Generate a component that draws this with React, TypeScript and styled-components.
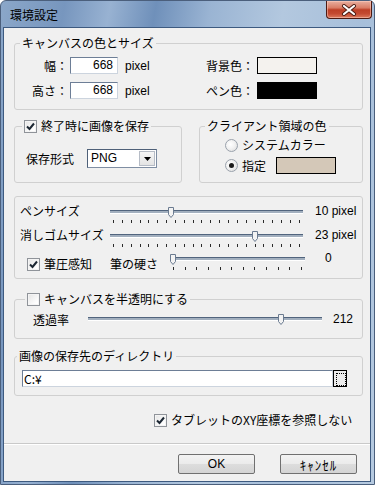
import React from "react";
import styled, { createGlobalStyle } from "styled-components";

const GlobalStyle = createGlobalStyle`
  html, body {
    margin: 0;
    padding: 0;
    background: #ffffff;
  }
  body {
    font-family: "Liberation Sans", "Noto Sans CJK JP", sans-serif;
    font-size: 12px;
    line-height: 14px;
    color: #000;
  }
  * {
    box-sizing: border-box;
  }
`;

const Window = styled.div`
  width: 375px;
  height: 485px;
  display: flex;
  flex-direction: column;
  border: 1px solid #4b5f7c;
  border-radius: 6px 6px 0 0;
  padding: 0 3px 2px 2px;
  background: linear-gradient(
    100deg,
    #8ba7c9 0%,
    #7796be 14%,
    #98b2d2 24%,
    #6f90ba 34%,
    #9ab4d3 46%,
    #b3c8df 62%,
    #a7bfda 80%,
    #b6cae0 100%
  );
`;

const TitleBar = styled.div`
  height: 26px;
  display: flex;
  align-items: center;
  justify-content: space-between;
  padding: 2px 0 0 7px;
`;

const Title = styled.span`
  font-family: "Noto Sans CJK JP", sans-serif;
  font-size: 12px;
  color: #000;
`;

const CloseButton = styled.div`
  align-self: flex-start;
  margin-top: -2px;
  margin-right: -1px;
  width: 46px;
  height: 18px;
  display: flex;
  align-items: center;
  justify-content: center;
  border: 1px solid #4d1a12;
  border-top: none;
  border-radius: 0 0 4px 4px;
  background: linear-gradient(
    180deg,
    #e9b0a0 0%,
    #d97d66 40%,
    #bd3f26 52%,
    #c44a31 75%,
    #dc7a5e 100%
  );
  box-shadow: inset 0 0 0 1px rgba(255, 210, 195, 0.5);
`;

const Client = styled.div`
  flex: 1;
  display: flex;
  flex-direction: column;
  border: 1px solid #3d5a80;
  background: #f0f0f0;
  padding: 8px 7px 0 10px;
`;

const Group = styled.fieldset<{ $pt: number; $pb: number; $mt?: number }>`
  margin: ${(p) => p.$mt ?? 0}px 0 0 0;
  padding: ${(p) => p.$pt}px 0 ${(p) => p.$pb}px 0;
  min-width: 0;
  border: 1px solid #d0d0d0;
  border-radius: 3px;
`;

const Legend = styled.legend<{ $ml: number }>`
  margin-left: ${(p) => p.$ml}px;
  padding: 0 2px;
  height: 14px;
  line-height: 14px;
  display: flex;
  align-items: center;
  gap: 4px;
  font-family: "Noto Sans CJK JP", sans-serif;
`;

const FieldRow = styled.div`
  display: flex;
  align-items: center;
  height: 17px;
  padding-right: 45px;
  & + & {
    margin-top: 8px;
  }
`;

const FieldLabel = styled.span<{ $w: number }>`
  width: ${(p) => p.$w}px;
  text-align: right;
  font-family: "Noto Sans CJK JP", sans-serif;
`;

const NumberBox = styled.div`
  width: 48px;
  height: 17px;
  margin-left: 2px;
  padding-right: 4px;
  text-align: right;
  line-height: 15px;
  background: #fff;
  border: 1px solid;
  border-color: #6d7e96 #ccd4de #ccd4de #6d7e96;
`;

const Unit = styled.span`
  margin-left: 7px;
`;

const Spacer = styled.div`
  flex: 1;
`;

const Swatch = styled.div<{ $color: string; $ml?: number }>`
  width: 60px;
  height: 17px;
  margin-left: ${(p) => p.$ml ?? 3}px;
  border: 1px solid #000;
  background: ${(p) => p.$color};
`;

const TwoCols = styled.div`
  display: flex;
  gap: 17px;
  margin-top: 9px;
`;

const FormatRow = styled.div`
  display: flex;
  align-items: center;
  padding-left: 11px;
  height: 19px;
`;

const Label = styled.span<{ $w?: number; $ml?: number; $mt?: number }>`
  font-family: "Noto Sans CJK JP", sans-serif;
  white-space: nowrap;
  ${(p) => (p.$w ? `width: ${p.$w}px; flex: none;` : "")}
  margin-left: ${(p) => p.$ml ?? 0}px;
  margin-top: ${(p) => p.$mt ?? 0}px;
`;

const Combo = styled.div`
  width: 70px;
  height: 19px;
  margin-left: 13px;
  display: flex;
  align-items: stretch;
  background: #fff;
  border: 1px solid;
  border-color: #4e6078 #7f8ea3 #7f8ea3 #4e6078;
`;

const ComboText = styled.span`
  flex: 1;
  padding-left: 3px;
  line-height: 17px;
`;

const ComboArrow = styled.div`
  width: 16px;
  margin: 1px;
  display: flex;
  align-items: center;
  justify-content: center;
  border: 1px solid #b6bcc6;
  background: linear-gradient(180deg, #f6f6f6 0%, #e4e4e4 100%);
`;

const RadioList = styled.div`
  display: flex;
  flex-direction: column;
  padding-left: 25px;
`;

const RadioRow = styled.div<{ $h: number; $mt?: number }>`
  display: flex;
  align-items: center;
  height: ${(p) => p.$h}px;
  margin-top: ${(p) => p.$mt ?? 0}px;
`;

const RadioDot = styled.span<{ $on?: boolean }>`
  width: 13px;
  height: 13px;
  margin-right: 4px;
  flex: none;
  display: flex;
  align-items: center;
  justify-content: center;
  border-radius: 50%;
  border: 1px solid #9aa2ac;
  background: radial-gradient(circle at 40% 40%, #ffffff 0%, #f2f2f2 45%, #d8d8d8 100%);
  &::after {
    content: "";
    width: 5px;
    height: 5px;
    border-radius: 50%;
    background: ${(p) => (p.$on ? "#1b1b1b" : "transparent")};
  }
`;

const CheckBox = styled.span`
  width: 13px;
  height: 13px;
  flex: none;
  display: flex;
  align-items: center;
  justify-content: center;
  border: 1px solid #8f9399;
  background: linear-gradient(135deg, #e4e4e4 0%, #ffffff 80%);
  box-shadow: inset 0 0 0 1px #f4f4f4;
`;

const SliderRow = styled.div<{ $pl: number; $mt?: number }>`
  display: flex;
  align-items: flex-start;
  height: 17px;
  padding-left: ${(p) => p.$pl}px;
  margin-top: ${(p) => p.$mt ?? 0}px;
`;

const SliderBox = styled.div<{ $w: number }>`
  position: relative;
  width: ${(p) => p.$w}px;
  min-height: 11px;
  padding-top: 3px;
  flex: none;
`;

const Groove = styled.div`
  height: 4px;
  border-top: 1px solid #51647d;
  border-bottom: 1px solid #ffffff;
  background: #a2afbe;
`;

const Ticks = styled.div`
  display: flex;
  justify-content: space-between;
  margin-top: 6px;
  padding: 0 3px;
`;

const Tick = styled.span`
  width: 1px;
  height: 3px;
  background: #2a2a2a;
`;

const Thumb = styled.svg`
  position: absolute;
  top: 0;
`;

const Value = styled.span<{ $ml: number; $mt?: number }>`
  margin-left: ${(p) => p.$ml}px;
  margin-top: ${(p) => p.$mt ?? -3}px;
  white-space: nowrap;
`;

const CheckLabel = styled.label<{ $w?: number }>`
  display: flex;
  align-items: center;
  gap: 4px;
  ${(p) => (p.$w ? `width: ${p.$w}px; flex: none;` : "")}
  font-family: "Noto Sans CJK JP", sans-serif;
`;

const PathRow = styled.div`
  display: flex;
  height: 17px;
  padding-left: 7px;
`;

const PathInput = styled.div`
  width: 311px;
  height: 17px;
  padding-left: 1px;
  line-height: 15px;
  background: #fff;
  border: 1px solid;
  border-color: #6d7e96 #ccd4de #ccd4de #6d7e96;
  font-family: "Noto Sans CJK JP", sans-serif;
`;

const BrowseButton = styled.div`
  width: 14px;
  height: 17px;
  padding: 2px;
  border: 1px solid #000;
  background: #ececec;
  &::after {
    content: "";
    display: block;
    width: 100%;
    height: 100%;
    border: 1px dotted #000;
  }
`;

const TabletRow = styled.div`
  display: flex;
  align-items: center;
  height: 14px;
  margin: 17px 0 0 140px;
`;

const Separator = styled.div`
  margin: 16px -7px 0 -10px;
  height: 2px;
  border-top: 1px solid #c9c9c9;
  border-bottom: 1px solid #ffffff;
`;

const ButtonRow = styled.div`
  display: flex;
  justify-content: flex-end;
  gap: 25px;
  margin-top: 9px;
  padding-right: 6px;
`;

const DialogButton = styled.button`
  width: 77px;
  height: 20px;
  padding: 0;
  border: 1px solid #707070;
  border-radius: 2px;
  background: linear-gradient(180deg, #f3f3f3 0%, #ebebeb 49%, #dddddd 50%, #d4d4d4 100%);
  font-family: "Liberation Sans", "Noto Sans CJK JP", sans-serif;
  font-size: 12px;
  color: #000;
`;

const NarrowKana = styled.span`
  font-family: "Noto Sans CJK JP", sans-serif;
  font-size: 13px;
  letter-spacing: 1px;
`;

const Check = () => (
  <CheckBox>
    <svg width="9" height="9" viewBox="0 0 9 9">
      <path d="M1 4.5 L3.5 7 L8 1.5" fill="none" stroke="#1c2733" strokeWidth="2" />
    </svg>
  </CheckBox>
);

type SliderProps = {
  width: number;
  value: number;
  min: number;
  max: number;
  ticks?: number;
};

const Slider = ({ width, value, min, max, ticks }: SliderProps) => {
  const left = Math.round(((value - min) / (max - min)) * (width - 6));
  return (
    <SliderBox $w={width}>
      <Groove />
      {ticks ? (
        <Ticks>
          {Array.from({ length: ticks }).map((_, i) => (
            <Tick key={i} />
          ))}
        </Ticks>
      ) : null}
      <Thumb style={{ left }} width={6} height={11} viewBox="0 0 6 11">
        <path d="M0.5 0.5H5.5V7.5L3 10.5L0.5 7.5Z" fill="#f3f3f3" stroke="#6b7b90" />
      </Thumb>
    </SliderBox>
  );
};

export default function App() {
  return (
    <>
      <GlobalStyle />
      <Window>
        <TitleBar>
          <Title>環境設定</Title>
          <CloseButton>
            <svg width="16" height="12" viewBox="0 0 16 12">
              <path d="M3 2 L13 10 M13 2 L3 10" stroke="#4a1b12" strokeWidth="4" strokeLinecap="round" />
              <path d="M3 2 L13 10 M13 2 L3 10" stroke="#ffffff" strokeWidth="2.2" strokeLinecap="round" />
            </svg>
          </CloseButton>
        </TitleBar>
        <Client>
          <Group $pt={7} $pb={10}>
            <Legend $ml={5}>キャンバスの色とサイズ</Legend>
            <FieldRow>
              <FieldLabel $w={53}>幅：</FieldLabel>
              <NumberBox>668</NumberBox>
              <Unit>pixel</Unit>
              <Spacer />
              <FieldLabel $w={60}>背景色：</FieldLabel>
              <Swatch $color="#f4f2ee" />
            </FieldRow>
            <FieldRow>
              <FieldLabel $w={53}>高さ：</FieldLabel>
              <NumberBox>668</NumberBox>
              <Unit>pixel</Unit>
              <Spacer />
              <FieldLabel $w={60}>ペン色：</FieldLabel>
              <Swatch $color="#000000" />
            </FieldRow>
          </Group>

          <TwoCols>
            <Group $pt={16} $pb={13} style={{ width: 168 }}>
              <Legend $ml={7}>
                <Check />
                終了時に画像を保存
              </Legend>
              <FormatRow>
                <Label>保存形式</Label>
                <Combo>
                  <ComboText>PNG</ComboText>
                  <ComboArrow>
                    <svg width="7" height="4" viewBox="0 0 7 4">
                      <path d="M0 0H7L3.5 4Z" fill="#000" />
                    </svg>
                  </ComboArrow>
                </Combo>
              </FormatRow>
            </Group>
            <Group $pt={5} $pb={8} style={{ width: 164 }}>
              <Legend $ml={5}>クライアント領域の色</Legend>
              <RadioList>
                <RadioRow $h={14}>
                  <RadioDot />
                  <Label>システムカラー</Label>
                </RadioRow>
                <RadioRow $h={17} $mt={5}>
                  <RadioDot $on />
                  <Label>指定</Label>
                  <Swatch $color="#d4c8b8" $ml={10} />
                </RadioRow>
              </RadioList>
            </Group>
          </TwoCols>

          <Group $mt={13} $pt={10} $pb={7}>
            <SliderRow $pl={5}>
              <Label $w={90} $mt={-3}>ペンサイズ</Label>
              <Slider width={193} value={10} min={1} max={30} ticks={22} />
              <Value $ml={12}>10 pixel</Value>
            </SliderRow>
            <SliderRow $pl={5} $mt={7}>
              <Label $w={90} $mt={-3}>消しゴムサイズ</Label>
              <Slider width={193} value={23} min={1} max={30} ticks={22} />
              <Value $ml={12}>23 pixel</Value>
            </SliderRow>
            <SliderRow $pl={12} $mt={6}>
              <CheckLabel $w={83} style={{ marginTop: 3 }}>
                <Check />
                筆圧感知
              </CheckLabel>
              <Label $w={60} $mt={3}>筆の硬さ</Label>
              <Slider width={135} value={0} min={0} max={100} ticks={12} />
              <Value $ml={20}>0</Value>
            </SliderRow>
          </Group>

          <Group $mt={13} $pt={8} $pb={13}>
            <Legend $ml={10}>
              <CheckBox />
              キャンバスを半透明にする
            </Legend>
            <SliderRow $pl={18} style={{ height: 11 }}>
              <Label $w={55} $mt={-1}>透過率</Label>
              <Slider width={234} value={212} min={0} max={255} />
              <Value $ml={11} $mt={-2}>212</Value>
            </SliderRow>
          </Group>

          <Group $mt={10} $pt={7} $pb={8}>
            <Legend $ml={2}>画像の保存先のディレクトリ</Legend>
            <PathRow>
              <PathInput>C:¥</PathInput>
              <BrowseButton />
            </PathRow>
          </Group>

          <TabletRow>
            <CheckLabel>
              <Check />
              タブレットのXY座標を参照しない
            </CheckLabel>
          </TabletRow>

          <Separator />

          <ButtonRow>
            <DialogButton>OK</DialogButton>
            <DialogButton>
              <NarrowKana>ｷｬﾝｾﾙ</NarrowKana>
            </DialogButton>
          </ButtonRow>
        </Client>
      </Window>
    </>
  );
}
